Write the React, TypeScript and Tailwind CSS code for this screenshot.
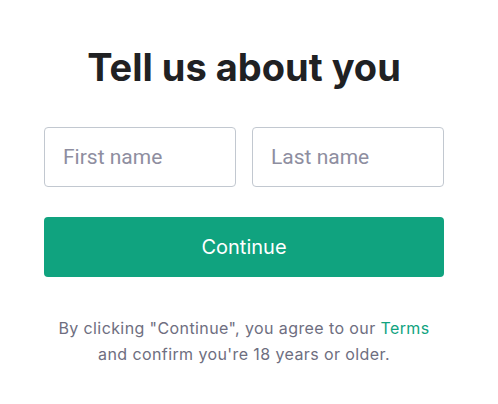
export default function App() {
  return (
    <div className="min-h-[404px] w-full bg-white font-['Inter',sans-serif]">
      <div className="ml-[44px] flex w-[400px] flex-col items-center pt-[42px]">
        <h1 className="text-[38px] font-bold leading-[50px] text-[#202123]">
          Tell us about you
        </h1>
        <div className="mt-[35px] flex w-full gap-4">
          <input
            placeholder="First name"
            className="h-[60px] w-full min-w-0 rounded-[4px] border border-[#c2c8d0] px-[18px] font-['Roboto',sans-serif] text-[21px] text-[#2d333a] outline-none placeholder:text-[#8e8ea0]"
          />
          <input
            placeholder="Last name"
            className="h-[60px] w-full min-w-0 rounded-[4px] border border-[#c2c8d0] px-[18px] font-['Roboto',sans-serif] text-[21px] text-[#2d333a] outline-none placeholder:text-[#8e8ea0]"
          />
        </div>
        <button
          type="button"
          className="mt-[30px] h-[60px] w-full rounded-[4px] bg-[#10a37f] text-[20px] text-white"
        >
          Continue
        </button>
        <p className="mt-[38px] text-center text-[16px] leading-[26px] tracking-[0.4px] text-[#6e6e80]">
          By clicking "Continue", you agree to our{" "}
          <a href="#" className="text-[#10a37f]">
            Terms
          </a>
          <br />
          and confirm you're 18 years or older.
        </p>
      </div>
    </div>
  );
}
